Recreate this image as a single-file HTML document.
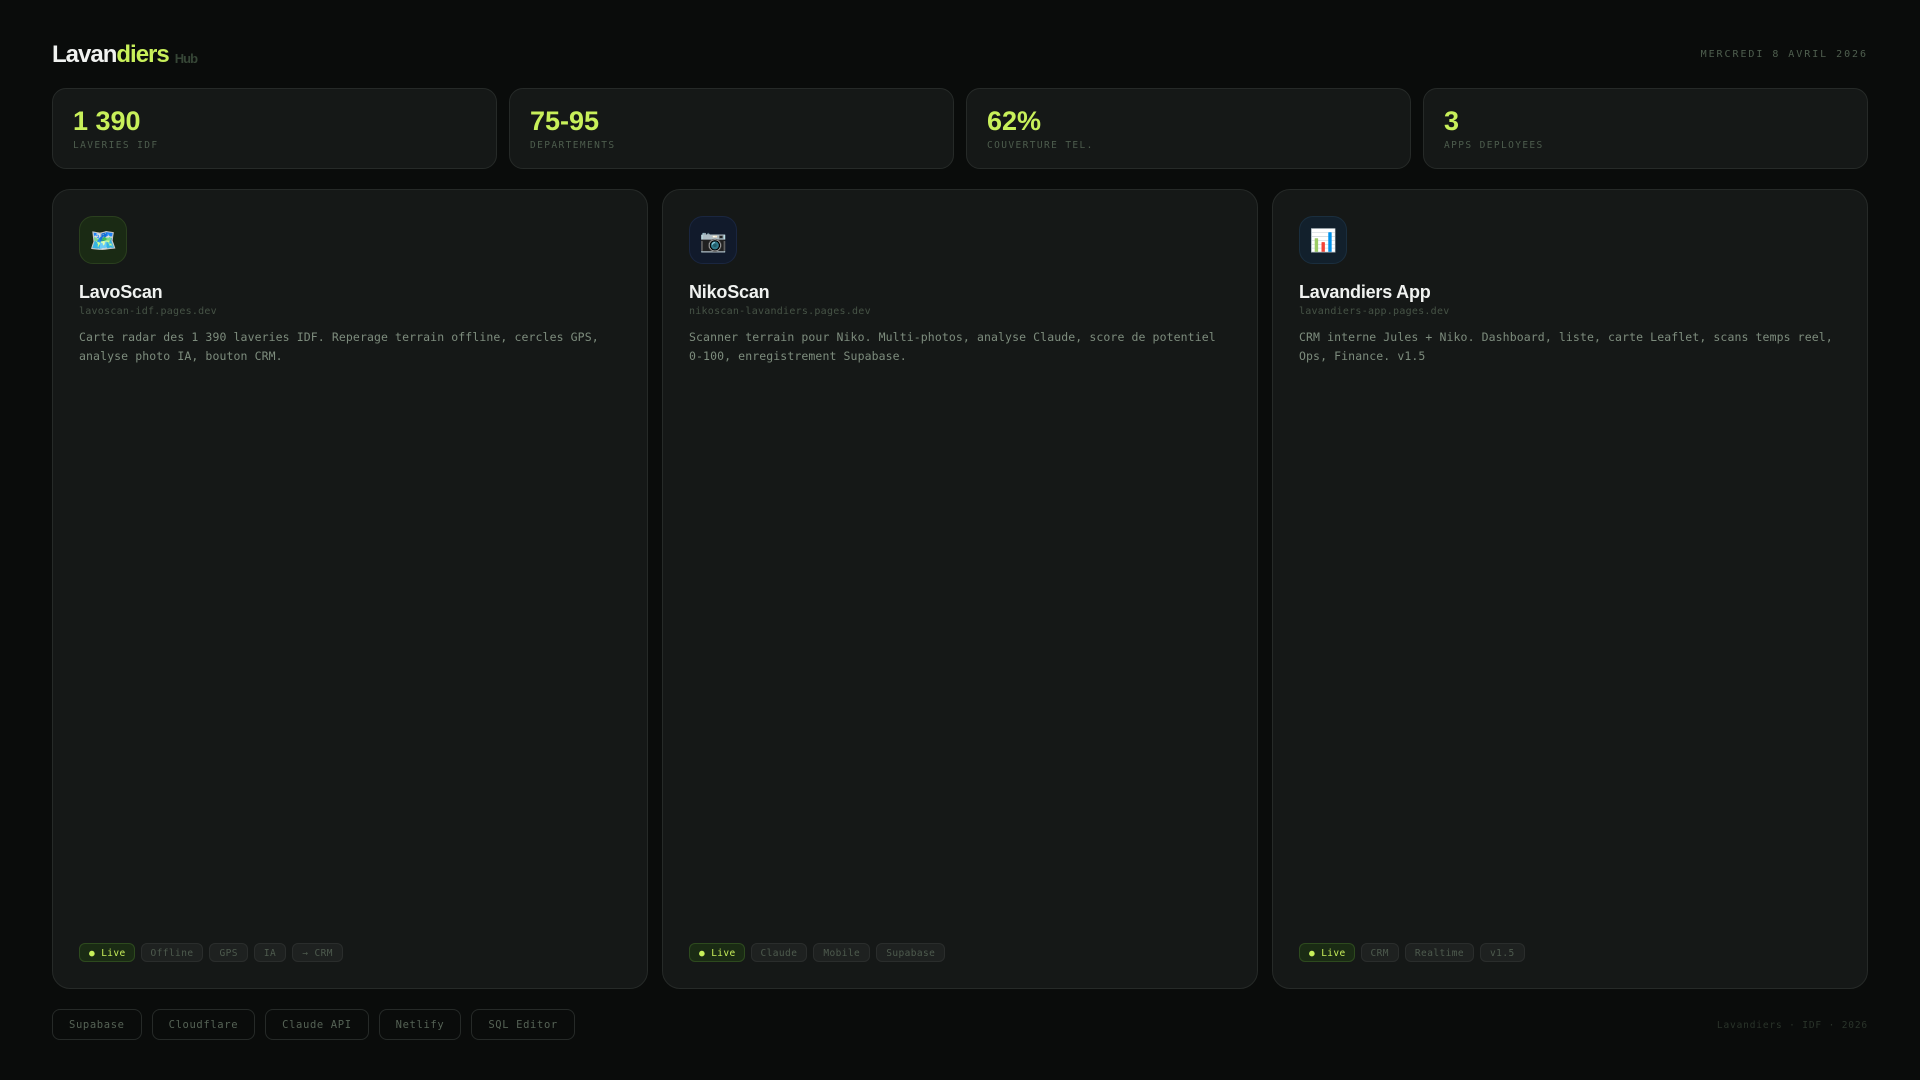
<!DOCTYPE html>
<html lang="fr">
<head>
<meta charset="utf-8">
<title>Lavandiers Hub</title>
<style>
*{margin:0;padding:0;box-sizing:border-box}
html,body{width:1920px;height:1080px;overflow:hidden;background:#0a0c0b}
body{position:relative;font-family:"Liberation Sans",sans-serif;color:#f0f0ee}
.mono{font-family:"DejaVu Sans Mono",monospace}
.logo{position:absolute;left:52px;top:41px;font-size:24px;font-weight:700;letter-spacing:-1px;line-height:28px;color:#f0f2f0;white-space:nowrap}
.logo b{color:#c8f05a;font-weight:700}
.logo span{font-size:13px;font-weight:700;color:#364636;margin-left:6px;position:relative;top:.5px}
.date{position:absolute;right:52px;top:49px;font-size:10px;letter-spacing:1.95px;line-height:12px;color:#4f5f4f;white-space:nowrap}
.stat{position:absolute;top:88px;width:445px;height:81px;background:#151817;border:1px solid #262a28;border-radius:14px;padding:16px 20px}
.stat .n{font-size:27px;font-weight:700;letter-spacing:0;line-height:32px;color:#c8f05a}
.stat .l{font-size:9.5px;letter-spacing:1.4px;line-height:11px;color:#4d5c4d;margin-top:3px;white-space:nowrap}
.card{position:absolute;top:189px;width:596px;height:800px;background:#151817;border:1px solid #262a28;border-radius:18px;padding:26px}
.ico{width:48px;height:48px;border-radius:14px;border:1px solid;display:flex;align-items:center;justify-content:center;font-size:22px;line-height:1;padding:1px 0 0 1px}
.g{background:#1a2a14;border-color:#2a3f1e}
.b{background:#111a2b;border-color:#1a2640}
.t{background:#12202c;border-color:#1a2e3e}
.name{font-size:18px;font-weight:700;letter-spacing:-.2px;line-height:21px;color:#f0f2f0;margin-top:18px}
.url{font-size:10px;letter-spacing:.25px;line-height:12px;color:#465346;margin-top:3px;white-space:nowrap}
.desc{font-size:11.5px;letter-spacing:.1px;line-height:19px;color:#7d8c7d;margin-top:10px}
.tags{position:absolute;left:26px;bottom:26px;display:flex;gap:6px}
.tag{flex:none;height:19px;padding:4px 9px 2px;border:1px solid #2a2d2c;background:#1e2120;border-radius:6px;font-size:9.5px;letter-spacing:.42px;line-height:11px;color:#4e5b4e;white-space:nowrap}
.tag.live{width:55.5px;background:#1a2b14;border-color:#2d4a1e;color:#c8f05a;letter-spacing:.38px;overflow:hidden}
.chips{position:absolute;left:52px;top:1009px;display:flex;gap:10px}
.chip{height:31px;padding:0 16px;border:1px solid #262a28;border-radius:8px;font-size:10.5px;letter-spacing:.06em;line-height:31px;color:#556255;white-space:nowrap}
.foot{position:absolute;right:52px;top:1020px;font-size:9.5px;letter-spacing:.85px;line-height:12px;color:#2a342a;white-space:nowrap}
</style>
</head>
<body>
<div class="logo">Lavan<b>diers</b><span>Hub</span></div>
<div class="date mono">MERCREDI 8 AVRIL 2026</div>

<div class="stat" style="left:52px"><div class="n">1 390</div><div class="l mono">LAVERIES IDF</div></div>
<div class="stat" style="left:509px"><div class="n">75-95</div><div class="l mono">DEPARTEMENTS</div></div>
<div class="stat" style="left:966px"><div class="n">62%</div><div class="l mono">COUVERTURE TEL.</div></div>
<div class="stat" style="left:1423px"><div class="n">3</div><div class="l mono">APPS DEPLOYEES</div></div>

<div class="card" style="left:52px">
  <div class="ico g">🗺️</div>
  <div class="name">LavoScan</div>
  <div class="url mono">lavoscan-idf.pages.dev</div>
  <div class="desc mono">Carte radar des 1 390 laveries IDF. Reperage terrain offline, cercles GPS,<br>analyse photo IA, bouton CRM.</div>
  <div class="tags mono"><span class="tag live">● Live</span><span class="tag">Offline</span><span class="tag">GPS</span><span class="tag">IA</span><span class="tag">→ CRM</span></div>
</div>

<div class="card" style="left:662px">
  <div class="ico b">📷</div>
  <div class="name">NikoScan</div>
  <div class="url mono">nikoscan-lavandiers.pages.dev</div>
  <div class="desc mono">Scanner terrain pour Niko. Multi-photos, analyse Claude, score de potentiel<br>0-100, enregistrement Supabase.</div>
  <div class="tags mono"><span class="tag live">● Live</span><span class="tag">Claude</span><span class="tag">Mobile</span><span class="tag">Supabase</span></div>
</div>

<div class="card" style="left:1272px">
  <div class="ico t">📊</div>
  <div class="name">Lavandiers App</div>
  <div class="url mono">lavandiers-app.pages.dev</div>
  <div class="desc mono">CRM interne Jules + Niko. Dashboard, liste, carte Leaflet, scans temps reel,<br>Ops, Finance. v1.5</div>
  <div class="tags mono"><span class="tag live">● Live</span><span class="tag">CRM</span><span class="tag">Realtime</span><span class="tag">v1.5</span></div>
</div>

<div class="chips mono"><span class="chip">Supabase</span><span class="chip">Cloudflare</span><span class="chip">Claude API</span><span class="chip">Netlify</span><span class="chip">SQL Editor</span></div>
<div class="foot mono">Lavandiers · IDF · 2026</div>
</body>
</html>
